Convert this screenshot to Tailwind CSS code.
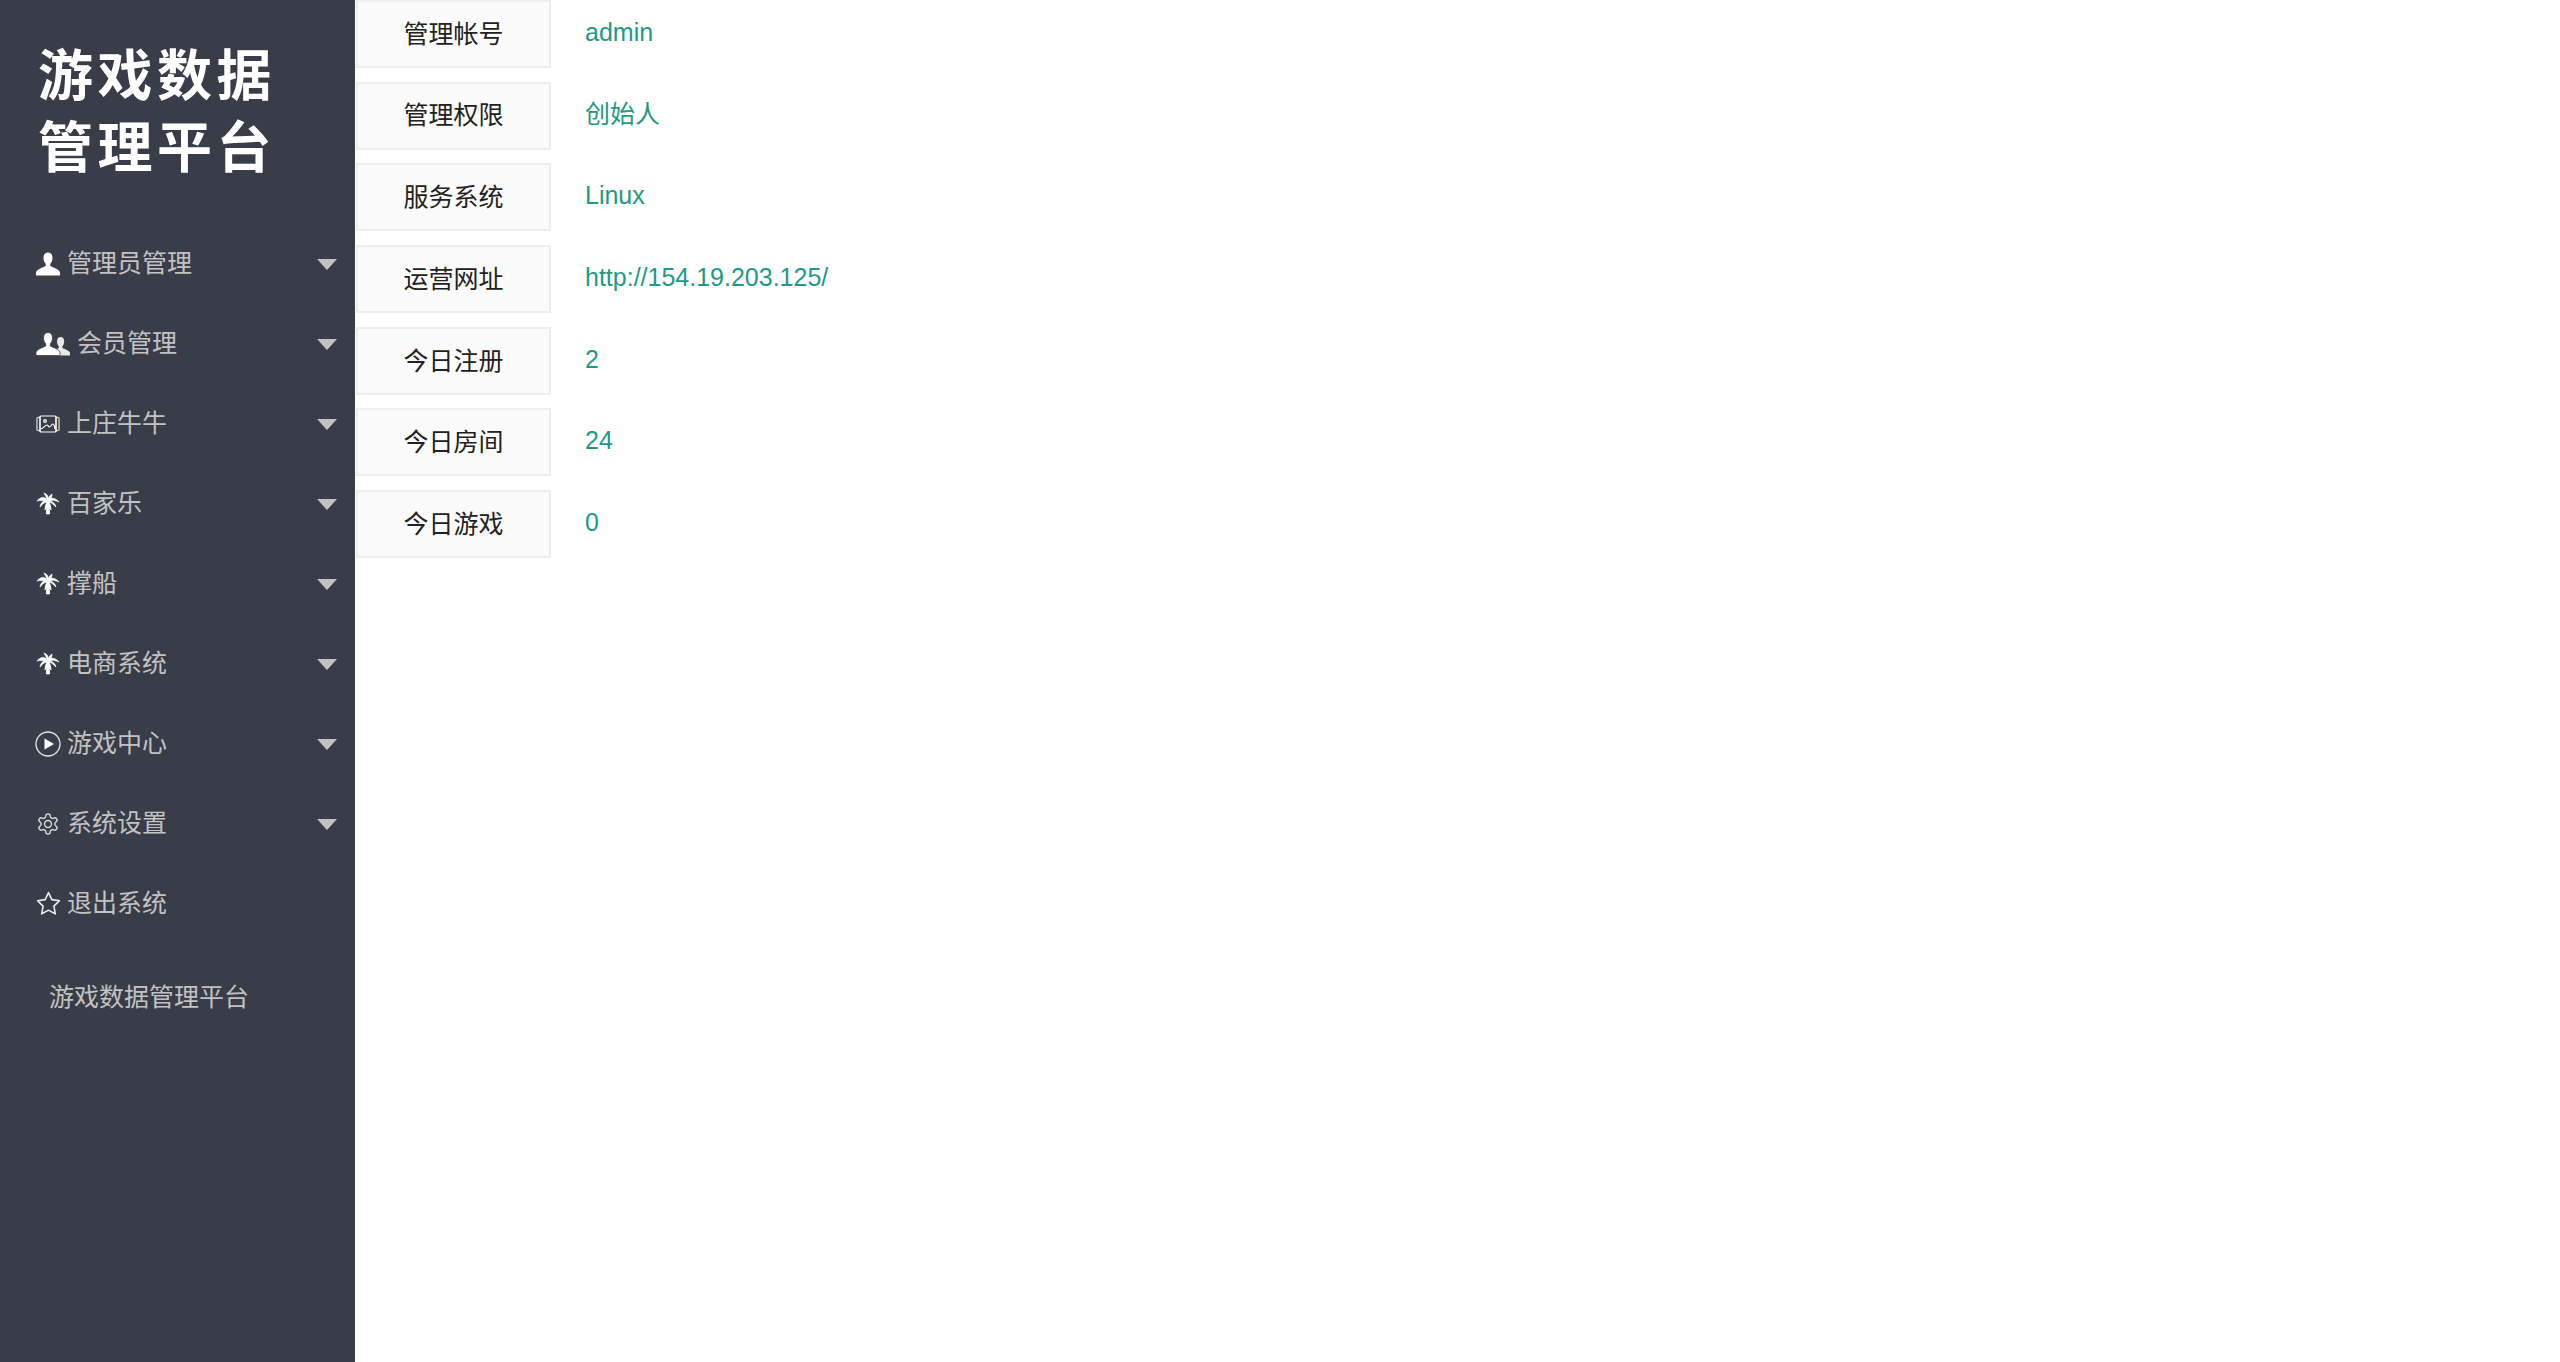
<!DOCTYPE html>
<html lang="zh-CN">
<head>
    <meta charset="UTF-8">
    <title>游戏数据管理平台</title>
    <script src="https://cdn.jsdelivr.net/npm/@tailwindcss/browser@4"></script>
</head>
<body class="bg-white overflow-hidden font-['Liberation_Sans','Noto_Sans_CJK_SC',sans-serif]">
<div class="flex h-screen">

    <!-- Sidebar -->
    <aside class="w-[355px] shrink-0 bg-[#393d49] text-[#c2c2c2] text-[25px]">
        <div class="h-[224px] pl-[38px] pt-[35px] text-white text-[55px] leading-[72px] tracking-[4.5px] font-bold font-['Noto_Sans_CJK_SC',sans-serif]">
            <div class="h-[72px]">游戏数据</div>
            <div class="h-[72px]">管理平台</div>
        </div>

        <nav>
            <a class="flex items-center h-[80px] pl-[36px] pr-[18px]">
                <svg class="w-[24px] h-[25px] shrink-0" viewBox="0 0 24 24" fill="#fff"><path d="M12 0c-3 0-4.500 2.200-4.500 5.500 0 2.600 1 4.700 2.200 5.800v2.200C7 15 1 16.500 0 20v3h24v-3c-1-3.500-7-5-9.700-6.500v-2.200c1.200-1.100 2.200-3.200 2.200-5.800 0-3.300-1.500-5.500-4.500-5.500z"/></svg>
                <span class="ml-[7px] flex-1">管理员管理</span>
                <span class="w-0 h-0 border-x-[10px] border-x-transparent border-t-[11px] border-t-[#c2c2c2]"></span>
            </a>
            <a class="flex items-center h-[80px] pl-[36px] pr-[18px]">
                <svg class="w-[34px] h-[25px] shrink-0" viewBox="0 0 34 24" fill="#fff"><path transform="translate(15 4.600) scale(.8)" fill="#e8e8e8" d="M12 0c-3 0-4.500 2.200-4.500 5.500 0 2.600 1 4.700 2.200 5.800v2.200C7 15 1 16.500 0 20v3h24v-3c-1-3.500-7-5-9.700-6.500v-2.200c1.200-1.100 2.200-3.200 2.200-5.800 0-3.300-1.500-5.500-4.500-5.500z"/><path stroke="#393d49" stroke-width=".8" d="M12 0c-3 0-4.500 2.200-4.500 5.500 0 2.600 1 4.700 2.200 5.800v2.200C7 15 1 16.500 0 20v3h24v-3c-1-3.500-7-5-9.700-6.500v-2.200c1.200-1.100 2.200-3.200 2.200-5.800 0-3.300-1.500-5.500-4.500-5.500z"/></svg>
                <span class="ml-[7px] flex-1">会员管理</span>
                <span class="w-0 h-0 border-x-[10px] border-x-transparent border-t-[11px] border-t-[#c2c2c2]"></span>
            </a>
            <a class="flex items-center h-[80px] pl-[36px] pr-[18px]">
                <svg class="w-[24px] h-[24px] shrink-0" viewBox="0 0 24 24" fill="none" stroke="#fff" stroke-width="1.200"><path d="M4 5 1 6v12l3 1z" stroke="#cfe0e0"/><path d="M20 5l3 1v12l-3 1z" stroke="#e8e0c0"/><rect x="4" y="4" width="16" height="16" rx="1"/><circle cx="9" cy="9" r="1.300"/><path d="M5 17c3-1 4-4 6-4 1.500 0 1 2 2.500 2s2-3 3.500-3 1.500 3 2 5"/></svg>
                <span class="ml-[7px] flex-1">上庄牛牛</span>
                <span class="w-0 h-0 border-x-[10px] border-x-transparent border-t-[11px] border-t-[#c2c2c2]"></span>
            </a>
            <a class="flex items-center h-[80px] pl-[36px] pr-[18px]">
                <svg class="w-[24px] h-[24px] shrink-0" viewBox="0 0 24 24" fill="#fff" stroke="#fff" stroke-width=".7"><path d="M11 9h2l.7 13h-3.400z"/><path d="M12 8C8 4 4 5 1 9c3-1 7 0 11 0z"/><path d="M12 8C8 8 5 10 4 15c2-3 5-5 8-5.500z"/><path d="M12 8C10 5 9 3 8 1c3 1 5 4 4 7z"/><path d="M12 8c1-3 2-5 4-6 0 3-1 5-4 7z"/><path d="M12 8c3-3 8-2 11 2-4-2-7-2-11-1z"/><path d="M12 8.500c4 .5 7 2.500 8 6.500-3-3-5-5-8-5.500z"/><path d="M11.500 9C10 12 9 14 9 18c1.500-3 3-6 3-9z"/><path d="M12.500 9c1.500 3 2.500 5 2.500 9-1.500-3-3-6-3-9z"/></svg>
                <span class="ml-[7px] flex-1">百家乐</span>
                <span class="w-0 h-0 border-x-[10px] border-x-transparent border-t-[11px] border-t-[#c2c2c2]"></span>
            </a>
            <a class="flex items-center h-[80px] pl-[36px] pr-[18px]">
                <svg class="w-[24px] h-[24px] shrink-0" viewBox="0 0 24 24" fill="#fff" stroke="#fff" stroke-width=".7"><path d="M11 9h2l.7 13h-3.400z"/><path d="M12 8C8 4 4 5 1 9c3-1 7 0 11 0z"/><path d="M12 8C8 8 5 10 4 15c2-3 5-5 8-5.500z"/><path d="M12 8C10 5 9 3 8 1c3 1 5 4 4 7z"/><path d="M12 8c1-3 2-5 4-6 0 3-1 5-4 7z"/><path d="M12 8c3-3 8-2 11 2-4-2-7-2-11-1z"/><path d="M12 8.500c4 .5 7 2.500 8 6.500-3-3-5-5-8-5.500z"/><path d="M11.500 9C10 12 9 14 9 18c1.500-3 3-6 3-9z"/><path d="M12.500 9c1.500 3 2.500 5 2.500 9-1.500-3-3-6-3-9z"/></svg>
                <span class="ml-[7px] flex-1">撑船</span>
                <span class="w-0 h-0 border-x-[10px] border-x-transparent border-t-[11px] border-t-[#c2c2c2]"></span>
            </a>
            <a class="flex items-center h-[80px] pl-[36px] pr-[18px]">
                <svg class="w-[24px] h-[24px] shrink-0" viewBox="0 0 24 24" fill="#fff" stroke="#fff" stroke-width=".7"><path d="M11 9h2l.7 13h-3.400z"/><path d="M12 8C8 4 4 5 1 9c3-1 7 0 11 0z"/><path d="M12 8C8 8 5 10 4 15c2-3 5-5 8-5.500z"/><path d="M12 8C10 5 9 3 8 1c3 1 5 4 4 7z"/><path d="M12 8c1-3 2-5 4-6 0 3-1 5-4 7z"/><path d="M12 8c3-3 8-2 11 2-4-2-7-2-11-1z"/><path d="M12 8.500c4 .5 7 2.500 8 6.500-3-3-5-5-8-5.500z"/><path d="M11.500 9C10 12 9 14 9 18c1.500-3 3-6 3-9z"/><path d="M12.500 9c1.500 3 2.500 5 2.500 9-1.500-3-3-6-3-9z"/></svg>
                <span class="ml-[7px] flex-1">电商系统</span>
                <span class="w-0 h-0 border-x-[10px] border-x-transparent border-t-[11px] border-t-[#c2c2c2]"></span>
            </a>
            <a class="flex items-center h-[80px] pl-[36px] pr-[18px]">
                <svg class="w-[26px] h-[26px] -ml-[1px] -mr-[1px] shrink-0" viewBox="0 0 26 26"><circle cx="13" cy="13" r="12" fill="none" stroke="#e4e4e4" stroke-width="1.300"/><path d="M9.500 7.500 19 13l-9.500 5.500z" fill="#fff"/></svg>
                <span class="ml-[7px] flex-1">游戏中心</span>
                <span class="w-0 h-0 border-x-[10px] border-x-transparent border-t-[11px] border-t-[#c2c2c2]"></span>
            </a>
            <a class="flex items-center h-[80px] pl-[36px] pr-[18px]">
                <svg class="w-[24px] h-[24px] shrink-0" viewBox="0 0 24 24" fill="none" stroke="#d8d8d8" stroke-width="1.400"><path d="M12.220 2h-.44a2 2 0 0 0-2 2v.18a2 2 0 0 1-1 1.730l-.43.25a2 2 0 0 1-2 0l-.15-.08a2 2 0 0 0-2.730.73l-.22.38a2 2 0 0 0 .73 2.730l.15.1a2 2 0 0 1 1 1.720v.51a2 2 0 0 1-1 1.740l-.15.09a2 2 0 0 0-.73 2.730l.22.38a2 2 0 0 0 2.730.73l.15-.08a2 2 0 0 1 2 0l.43.25a2 2 0 0 1 1 1.730V20a2 2 0 0 0 2 2h.44a2 2 0 0 0 2-2v-.18a2 2 0 0 1 1-1.730l.43-.25a2 2 0 0 1 2 0l.15.08a2 2 0 0 0 2.730-.73l.22-.39a2 2 0 0 0-.73-2.730l-.15-.08a2 2 0 0 1-1-1.740v-.5a2 2 0 0 1 1-1.740l.15-.09a2 2 0 0 0 .73-2.730l-.22-.38a2 2 0 0 0-2.730-.73l-.15.08a2 2 0 0 1-2 0l-.43-.25a2 2 0 0 1-1-1.730V4a2 2 0 0 0-2-2z"/><circle cx="12" cy="12" r="3.500"/></svg>
                <span class="ml-[7px] flex-1">系统设置</span>
                <span class="w-0 h-0 border-x-[10px] border-x-transparent border-t-[11px] border-t-[#c2c2c2]"></span>
            </a>
            <a class="flex items-center h-[80px] pl-[36px] pr-[18px]">
                <svg class="w-[25px] h-[25px] -mt-[2px] shrink-0" viewBox="0 0 24 24" fill="none" stroke="#f0f0f0" stroke-width="1.500" stroke-linejoin="round"><path d="m12 1.500 3.200 6.800 7.300 1-5.300 5.200 1.300 7.500-6.500-3.600-6.500 3.600 1.300-7.500L1.500 9.300l7.300-1z"/></svg>
                <span class="ml-[6px] flex-1">退出系统</span>
            </a>
        </nav>

        <div class="pl-[49px] pt-[35px]">游戏数据管理平台</div>
    </aside>

    <!-- Content -->
    <main class="flex-1 pl-px text-[25px]">
        <div class="flex items-start h-[68px] mb-[13.7px]">
            <div class="w-[195px] h-full pt-[1px] flex items-center justify-center bg-[#fbfbfb] border-2 border-[#eeeeee] text-[#222]">管理帐号</div>
            <div class="pl-[34px] pt-[14px] text-[#1f9a85]">admin</div>
        </div>
        <div class="flex items-start h-[68px] mb-[13.7px]">
            <div class="w-[195px] h-full pt-[1px] flex items-center justify-center bg-[#fbfbfb] border-2 border-[#eeeeee] text-[#222]">管理权限</div>
            <div class="pl-[34px] pt-[14px] text-[#1f9a85]">创始人</div>
        </div>
        <div class="flex items-start h-[68px] mb-[13.7px]">
            <div class="w-[195px] h-full pt-[1px] flex items-center justify-center bg-[#fbfbfb] border-2 border-[#eeeeee] text-[#222]">服务系统</div>
            <div class="pl-[34px] pt-[14px] text-[#1f9a85]">Linux</div>
        </div>
        <div class="flex items-start h-[68px] mb-[13.7px]">
            <div class="w-[195px] h-full pt-[1px] flex items-center justify-center bg-[#fbfbfb] border-2 border-[#eeeeee] text-[#222]">运营网址</div>
            <div class="pl-[34px] pt-[14px] text-[#1f9a85]">http://154.19.203.125/</div>
        </div>
        <div class="flex items-start h-[68px] mb-[13.7px]">
            <div class="w-[195px] h-full pt-[1px] flex items-center justify-center bg-[#fbfbfb] border-2 border-[#eeeeee] text-[#222]">今日注册</div>
            <div class="pl-[34px] pt-[14px] text-[#1f9a85]">2</div>
        </div>
        <div class="flex items-start h-[68px] mb-[13.7px]">
            <div class="w-[195px] h-full pt-[1px] flex items-center justify-center bg-[#fbfbfb] border-2 border-[#eeeeee] text-[#222]">今日房间</div>
            <div class="pl-[34px] pt-[14px] text-[#1f9a85]">24</div>
        </div>
        <div class="flex items-start h-[68px] mb-[13.7px]">
            <div class="w-[195px] h-full pt-[1px] flex items-center justify-center bg-[#fbfbfb] border-2 border-[#eeeeee] text-[#222]">今日游戏</div>
            <div class="pl-[34px] pt-[14px] text-[#1f9a85]">0</div>
        </div>
    </main>
</div>
</body>
</html>
